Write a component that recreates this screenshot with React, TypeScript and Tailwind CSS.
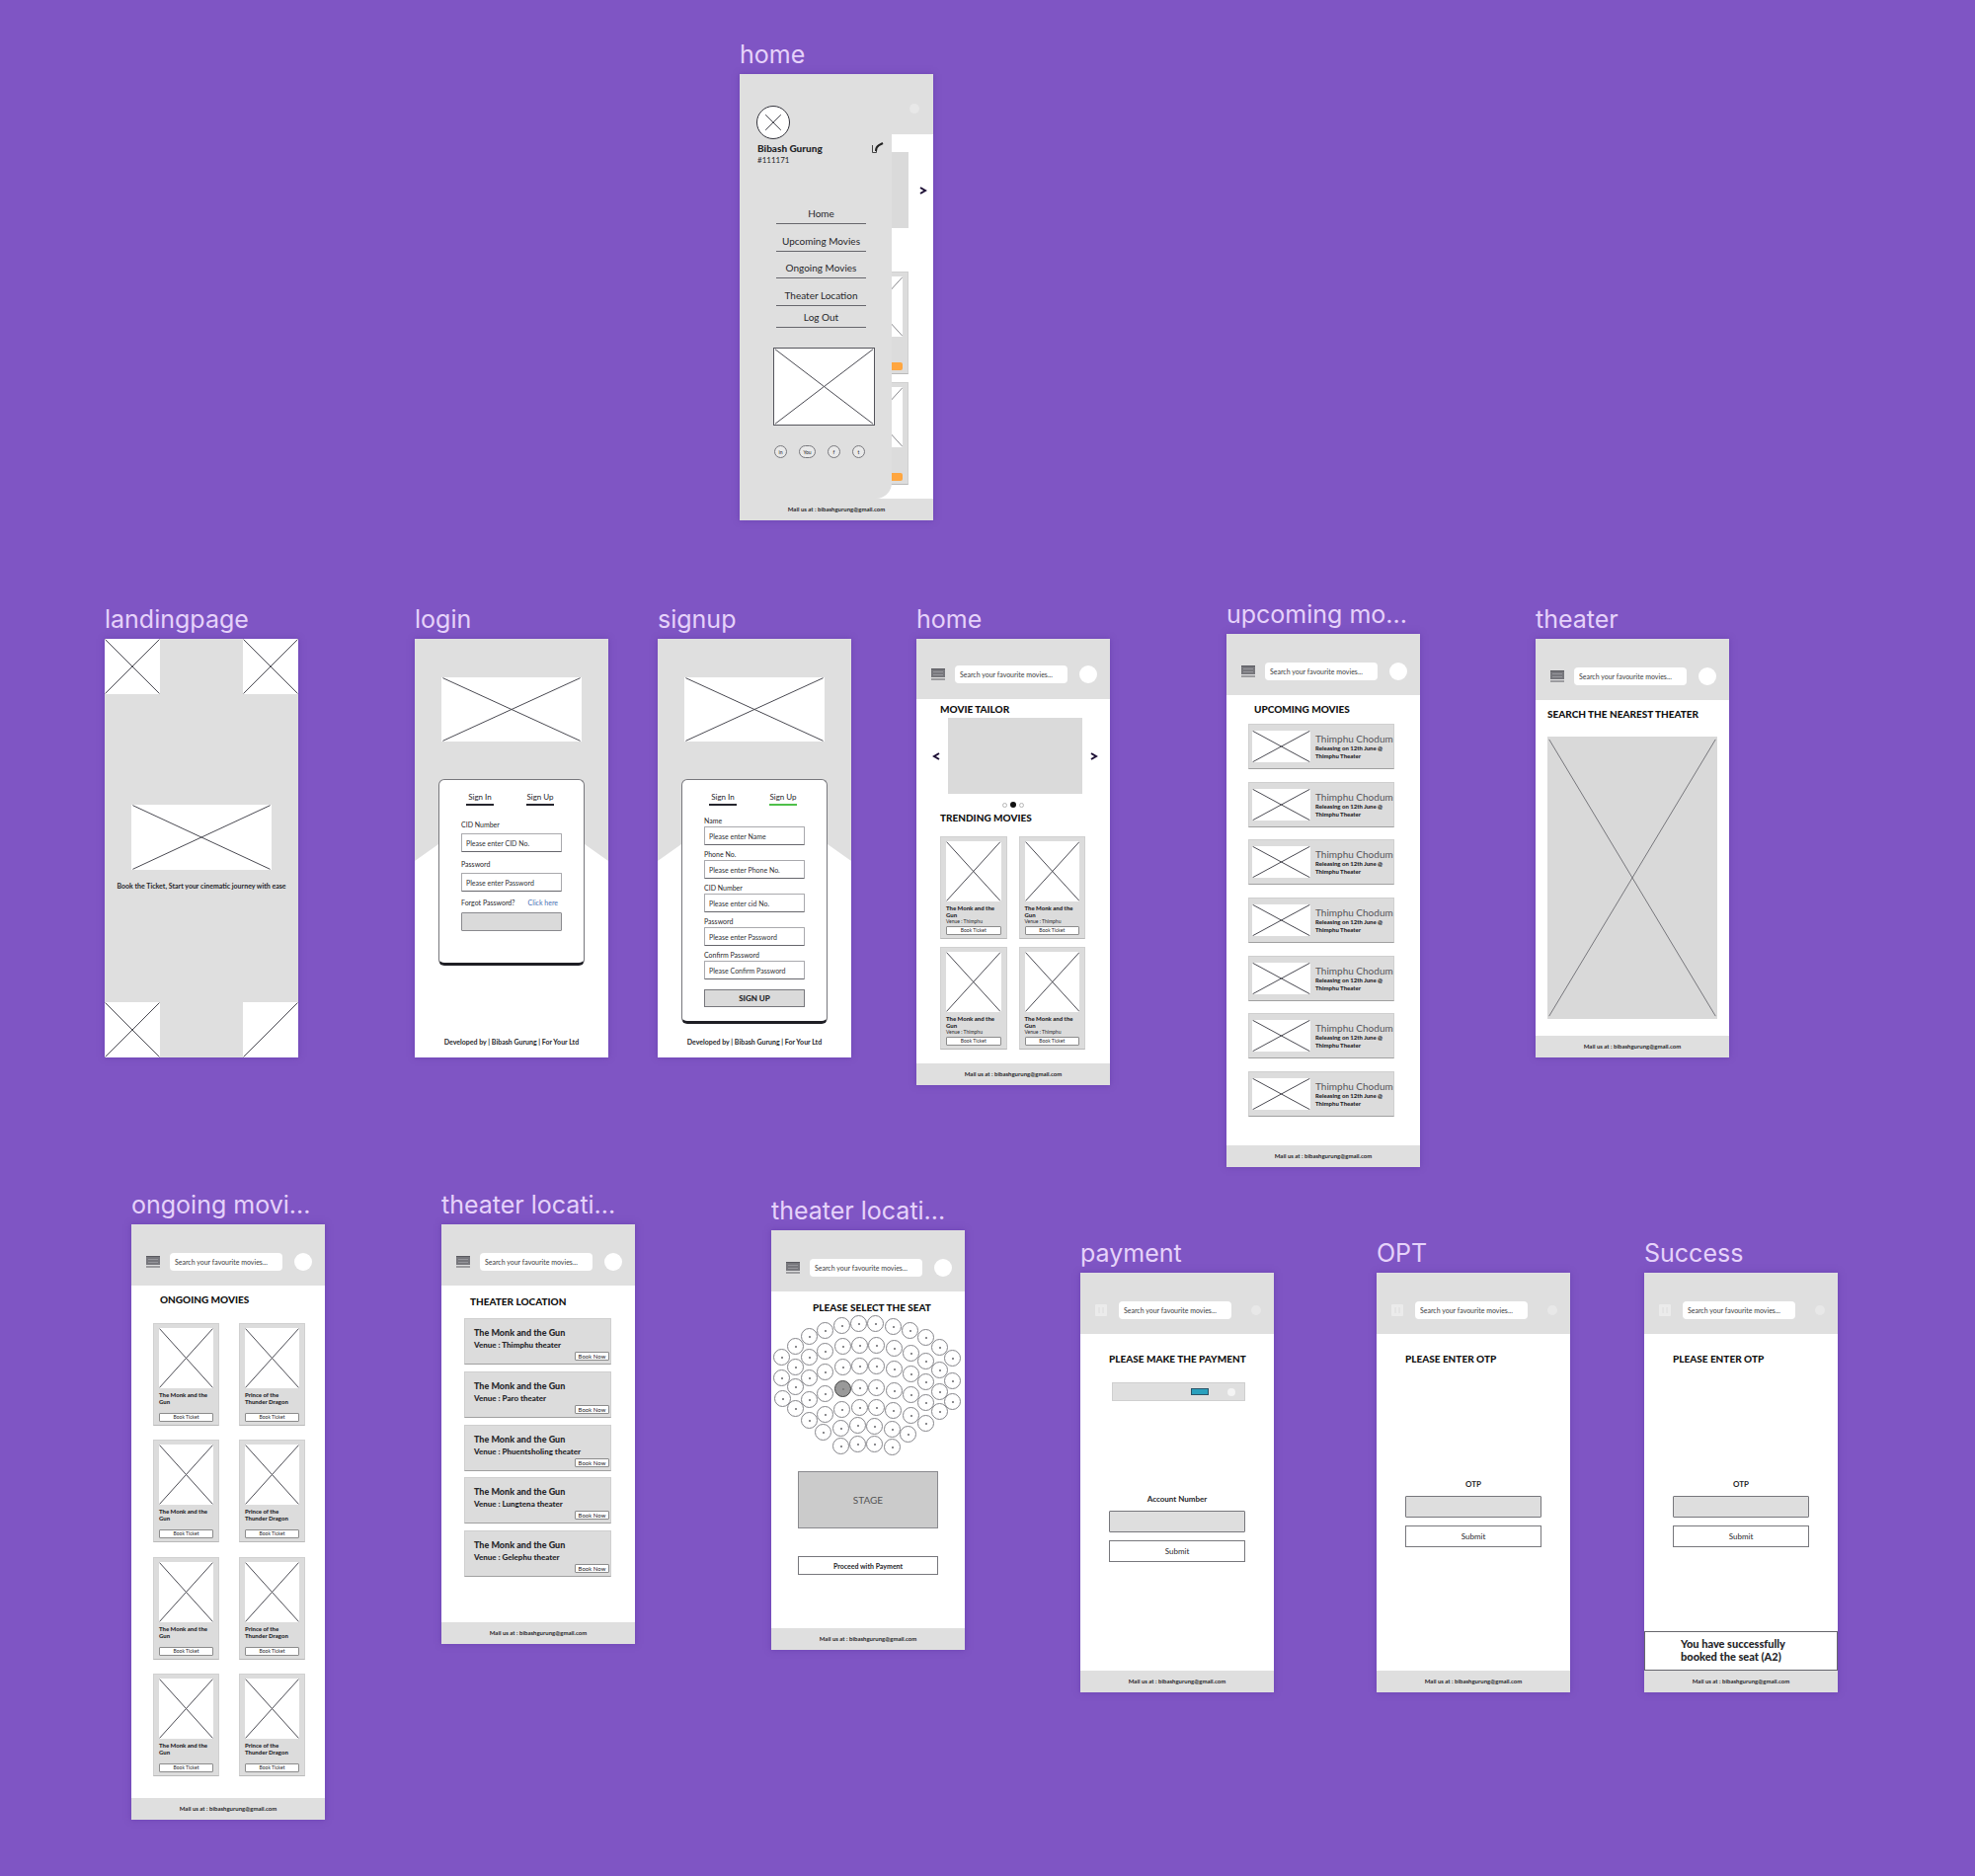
import { useId } from "react";
import type { ReactNode } from "react";

function Cross({ one = false, stroke = "#4a4a52" }: { one?: boolean; stroke?: string }) {
  return (
    <svg className="block h-full w-full" viewBox="0 0 100 100" preserveAspectRatio="none" aria-hidden="true">
      <path d="M1 99 L99 1" stroke={stroke} strokeWidth="1" vectorEffect="non-scaling-stroke" fill="none" />
      {!one && <path d="M1 1 L99 99" stroke={stroke} strokeWidth="1" vectorEffect="non-scaling-stroke" fill="none" />}
    </svg>
  );
}

function Artboard({ label, place, size, children }: { label: string; place: string; size: string; children: ReactNode }) {
  return (
    <section className={`absolute w-[196px] ${place}`}>
      <h2 className="mb-1 text-[25px] leading-8 font-normal whitespace-nowrap text-[#e6d2fa]">{label}</h2>
      <div className={`relative flex flex-col overflow-hidden bg-white font-[Lato,sans-serif] text-[#26262a] shadow-[0_0_6px_rgba(90,50,160,0.5)] ${size}`}>
        {children}
      </div>
    </section>
  );
}

function MenuIcon() {
  return (
    <svg className="block h-3 w-3.5" viewBox="0 0 14 12" aria-hidden="true">
      <rect width="14" height="9" fill="#77777c" />
      <path d="M0 .5H14M0 11H14" stroke="#5a5a60" />
      <path d="M2 3.5H12M2 6.5H12" stroke="#96969b" />
    </svg>
  );
}

function SearchBar({ pale = false, home = false }: { pale?: boolean; home?: boolean }) {
  return (
    <header className={`flex shrink-0 items-start bg-[#dfdfdf] pl-[15px] ${home ? "h-[61px] pt-[27px]" : "h-[62px] pt-[29px]"}`}>
      <button type="button" aria-label="Menu" className="flex h-[18px] w-3.5 items-center">
        {pale ? (
          <svg className="block h-3 w-3" viewBox="0 0 12 12" aria-hidden="true">
            <rect width="12" height="12" rx="1" fill="#ebebeb" />
            <path d="M4 3v6M8 3v6" stroke="#dcdcdc" />
          </svg>
        ) : (
          <MenuIcon />
        )}
      </button>
      <input
        type="search"
        aria-label="Search movies"
        placeholder="Search your favourite movies..."
        className="ml-2.5 h-[18px] w-[114px] rounded-[4px] bg-white px-[5px] text-[7px] leading-[10px] placeholder:text-[#3c3c40]"
      />
      {pale ? (
        <button type="button" aria-label="Profile" className="mt-1 ml-5 size-2.5 rounded-full bg-[#e8e8e8]" />
      ) : (
        <button type="button" aria-label="Profile" className="ml-3 size-[18px] rounded-full bg-white" />
      )}
    </header>
  );
}

function Footer() {
  return (
    <footer className="mt-auto flex h-[22px] shrink-0 items-center justify-center bg-[#dfdfdf] text-[6px] leading-[8px] font-bold">
      <p>Mail us at : bibashgurung@gmail.com</p>
    </footer>
  );
}

function Heading({ children, className }: { children?: ReactNode; className: string }) {
  return <h3 className={`min-h-3 shrink-0 text-[10px] leading-[12px] font-black whitespace-nowrap text-[#111] ${className}`}>{children}</h3>;
}

function MovieCard({ title, venue, hot = false }: { title: string[]; venue?: string; hot?: boolean }) {
  if (hot) {
    return (
      <article className="h-[104px] border border-b-[#b9b9b9] border-[#d0d0d0] bg-[#dcdcdc] px-[5px] pt-1">
        <div className="h-[61px] bg-white">
          <Cross stroke="#88888c" />
        </div>
        <button type="button" aria-label="Book ticket" className="mt-[26px] ml-auto block h-2 w-[52px] rounded-[2px] bg-[#ffa640]" />
      </article>
    );
  }
  return (
    <article className="h-[104px] border border-b-[#b9b9b9] border-[#d0d0d0] bg-[#dcdcdc] px-[5px] pt-1">
      <div className="h-[61px] bg-white">
        <Cross />
      </div>
      <h4 className="mt-[3px] text-[6px] leading-[7px] font-black whitespace-nowrap">
        {title[0]}
        <br />
        {title[1]}
      </h4>
      <p className="h-[7px] text-[5px] leading-[7px] whitespace-nowrap">{venue}</p>
      <button
        type="button"
        className="mt-[1px] block h-[9px] w-full rounded-[1px] border border-[#8c8c8c] bg-white text-[5px] leading-[7px]"
      >
        Book Ticket
      </button>
    </article>
  );
}

const MONK = ["The Monk and the", "Gun"];
const PRINCE = ["Prince of the", "Thunder Dragon"];

function HomeScreen({ hot = false }: { hot?: boolean }) {
  return (
    <>
      <SearchBarForHome hot={hot} />
      <Heading className="mt-1 ml-6">{!hot && "MOVIE TAILOR"}</Heading>
      <div className={`flex h-[77px] shrink-0 items-center justify-between pl-4 ${hot ? "mt-0.5 pr-1.5" : "mt-[3px] pr-3"}`}>
        <button type="button" aria-label="Previous" className="w-2">
          <Arrow flip />
        </button>
        <div className="h-full w-[136px] bg-[#dadada]" />
        <button type="button" aria-label="Next" className="w-2">
          <Arrow />
        </button>
      </div>
      <div className={`flex shrink-0 items-center justify-center gap-[3px] pt-1 ${hot ? "h-[19px]" : "h-[18px]"}`}>
        <span className="size-[5px] rounded-full border border-[#b5b5b5]" />
        <span className="size-[6px] rounded-full bg-[#111]" />
        <span className="size-[5px] rounded-full border border-[#b5b5b5]" />
      </div>
      <Heading className="ml-6">{!hot && "TRENDING MOVIES"}</Heading>
      <div className="mt-[13px] grid grid-cols-2 gap-x-3 gap-y-2 pr-[25px] pl-6">
        {[0, 1, 2, 3].map((i) => (
          <MovieCard key={i} title={MONK} venue="Venue : Thimphu" hot={hot} />
        ))}
      </div>
      <Footer />
    </>
  );
}

function SearchBarForHome({ hot }: { hot: boolean }) {
  if (!hot) return <SearchBar home />;
  return (
    <header className="flex h-[61px] shrink-0 justify-end bg-[#dfdfdf] pt-[30px] pr-[14px]">
      <button type="button" aria-label="Profile" className="size-2.5 rounded-full bg-[#e8e8e8]" />
    </header>
  );
}

function Arrow({ flip = false }: { flip?: boolean }) {
  return (
    <svg className="block h-2 w-2" viewBox="0 0 8 8" aria-hidden="true">
      <path d={flip ? "M7 1 L2 4 L7 7" : "M1 1 L6 4 L1 7"} stroke="#1b0d33" strokeWidth="2" fill="none" />
    </svg>
  );
}

const LINKS = ["Home", "Upcoming Movies", "Ongoing Movies", "Theater Location", "Log Out"];
const LINK_HEIGHTS = ["h-5", "h-7", "h-[27px]", "h-7", "h-[22px]"];

function Sidebar() {
  return (
    <aside className="absolute inset-x-0 top-0 h-[430px] w-[154px] rounded-br-[16px] bg-[#dfdfdf]">
      <div className="mt-8 ml-[17px] flex size-[34px] items-center justify-center rounded-full border border-[#33333b] bg-white">
        <div className="size-4">
          <Cross />
        </div>
      </div>
      <div className="mt-[3px] flex justify-between pr-2 pl-[18px]">
        <div>
          <p className="text-[10px] leading-[13px] font-black">Bibash Gurung</p>
          <p className="text-[8px] leading-[10px]">#111171</p>
        </div>
        <button type="button" aria-label="Edit profile" className="h-3 w-3.5">
          <svg className="block h-3 w-3.5" viewBox="0 0 14 12" aria-hidden="true">
            <path d="M2.5 3V10.5H6.5V9" stroke="#444" fill="none" />
            <path d="M6 9 Q6 5 9 3.2 L13 1" stroke="#222" strokeWidth="2" fill="none" />
          </svg>
        </button>
      </div>
      <nav className="mt-10 ml-[37px] flex w-[91px] flex-col">
        {LINKS.map((l, i) => (
          <a key={l} href="#" className={`flex items-end justify-center border-b border-[#66666c] pb-1 text-[10px] leading-[12px] whitespace-nowrap ${LINK_HEIGHTS[i]}`}>
            {l}
          </a>
        ))}
      </nav>
      <div className="mt-5 ml-[34px] h-[79px] w-[103px] border border-[#55555c] bg-white">
        <Cross />
      </div>
      <div className="mt-5 ml-[35px] flex items-center gap-3">
        {["in", "You", "f", "t"].map((s, i) => (
          <a
            key={s}
            href="#"
            className={`flex h-[13px] items-center justify-center rounded-full border border-[#77777c] bg-[#e9e9e9] text-[5px] leading-[6px] ${i === 1 ? "w-[17px]" : "w-[13px]"}`}
          >
            {s}
          </a>
        ))}
      </div>
    </aside>
  );
}

function Landing() {
  return (
    <div className="flex grow flex-col justify-between bg-[#dfdfdf]">
      <div className="flex justify-between">
        <div className="size-14 bg-white"><Cross /></div>
        <div className="size-14 bg-white"><Cross /></div>
      </div>
      <div className="pb-0.5">
        <div className="mx-auto h-[66px] w-[142px] bg-white"><Cross /></div>
        <p className="mt-[11px] text-center text-[7px] leading-[10px] font-bold whitespace-nowrap">
          Book the Ticket, Start your cinematic journey with ease
        </p>
      </div>
      <div className="flex justify-between">
        <div className="size-14 bg-white"><Cross /></div>
        <div className="size-14 bg-white"><Cross one /></div>
      </div>
    </div>
  );
}

function Field({ label, hint, tall }: { label: string; hint: string; tall: boolean }) {
  const id = useId();
  return (
    <div className={tall ? "h-10" : "h-[34px]"}>
      <label htmlFor={id} className={`block text-[7px] ${tall ? "h-[14px] leading-[10px]" : "h-[11px] leading-[11px]"}`}>{label}</label>
      <input
        id={id}
        type="text"
        placeholder={hint}
        className="block h-[19px] w-full rounded-[1px] border border-b-[#66666c] border-[#a9a9ad] bg-white px-1 text-[7px] leading-[10px] placeholder:text-[#303034]"
      />
    </div>
  );
}

function AuthScreen({ signup = false }: { signup?: boolean }) {
  return (
    <div className="relative flex grow flex-col items-center bg-[#dfdfdf] pt-[39px]">
      <svg className="absolute inset-0 h-full w-full" viewBox="0 0 196 424" preserveAspectRatio="none" aria-hidden="true">
        <path d="M0 225 L24 208 Q98 160 172 208 L196 225 V424 H0Z" fill="#fff" />
      </svg>
      <div className="relative h-[65px] w-[142px] bg-white"><Cross /></div>
      <form className="relative mt-[38px] w-[148px] rounded-[6px] border border-b-[3px] border-[#77777c] border-b-[#1e1e24] bg-white px-[22px] pt-[13px] pb-3">
        <div className="flex justify-between pr-2 pl-[5px] text-[8px] leading-[9px]">
          <button type="button" className="w-7 border-b-2 border-[#26262e] pb-0.5 leading-[9px]">Sign In</button>
          <button type="button" className={signup ? "w-7 border-b-2 border-[#4fc04a] pb-0.5 leading-[9px]" : "w-7 border-b-2 border-[#26262e] pb-0.5 leading-[9px]"}>
            Sign Up
          </button>
        </div>
        {signup ? (
          <div className="pt-2.5 pb-0.5">
            <Field tall={false} label="Name" hint="Please enter Name" />
            <Field tall={false} label="Phone No." hint="Please enter Phone No." />
            <Field tall={false} label="CID Number" hint="Please enter cid No." />
            <Field tall={false} label="Password" hint="Please enter Password" />
            <Field tall={false} label="Confirm Password" hint="Please Confirm Password" />
            <button type="button" className="mt-1.5 block h-[18px] w-full border border-[#77777c] bg-[#dadada] text-[8px] leading-[10px] font-black">
              SIGN UP
            </button>
          </div>
        ) : (
          <div className="pt-3.5">
            <Field tall label="CID Number" hint="Please enter CID No." />
            <Field tall label="Password" hint="Please enter Password" />
            <p className="flex justify-between text-[7px] leading-[8px] whitespace-nowrap">
              Forgot Password?
              <a href="#" className="pr-1 text-[#4a6fb5]">Click here</a>
            </p>
            <button type="button" aria-label="Sign in" className="mt-1.5 mb-5 block h-[19px] w-full rounded-[1px] border border-[#8a8a8e] bg-[#dadada]" />
          </div>
        )}
      </form>
      <p className="relative mt-auto mb-[11px] text-[7px] leading-[10px] font-bold whitespace-nowrap">
        Developed by | Bibash Gurung | For Your Ltd
      </p>
    </div>
  );
}

function Upcoming() {
  return (
    <>
      <SearchBar />
      <Heading className="mt-2 ml-7">UPCOMING MOVIES</Heading>
      <ul className="mt-[9px] mr-[26px] ml-[22px] flex h-[398px] flex-col justify-between">
        {[0, 1, 2, 3, 4, 5, 6].map((i) => (
          <li key={i} className="flex h-[46px] overflow-hidden border border-b-[#a0a0a0] border-[#cfcfcf] bg-[#dcdcdc] pt-1.5 pl-[3px]">
            <div className="h-8 w-[59px] shrink-0 bg-white"><Cross /></div>
            <div className="pl-[5px] whitespace-nowrap">
              <h4 className="pt-0.5 text-[10px] leading-[12px] text-[#55555a]">Thimphu Chodum</h4>
              <p className="text-[6px] leading-[8px] font-black">
                Releasing on 12th June @
                <br />
                Thimphu Theater
              </p>
            </div>
          </li>
        ))}
      </ul>
      <Footer />
    </>
  );
}

function Theater() {
  return (
    <>
      <SearchBar />
      <Heading className="mt-2 ml-3">SEARCH THE NEAREST THEATER</Heading>
      <div className="mx-3 mt-[17px] h-[286px] bg-[#d9d9d9]"><Cross stroke="#77777c" /></div>
      <Footer />
    </>
  );
}

function Ongoing() {
  return (
    <>
      <SearchBar />
      <Heading className="mt-2 ml-[29px]">ONGOING MOVIES</Heading>
      <div className="mt-[18px] mr-5 ml-[22px] grid h-[459px] grid-cols-2 content-between gap-x-5">
        {[0, 1, 2, 3, 4, 5, 6, 7].map((i) => (
          <MovieCard key={i} title={i % 2 ? PRINCE : MONK} />
        ))}
      </div>
      <Footer />
    </>
  );
}

const VENUES = ["Thimphu theater", "Paro theater", "Phuentsholing theater", "Lungtena theater", "Gelephu theater"];

function Locations() {
  return (
    <>
      <SearchBar />
      <Heading className="mt-2.5 ml-[29px]">THEATER LOCATION</Heading>
      <ul className="mt-[11px] mr-6 ml-[23px] flex h-[262px] flex-col justify-between">
        {VENUES.map((v) => (
          <li key={v} className="h-[47px] border border-b-[#a0a0a0] border-[#cfcfcf] bg-[#dcdcdc] pt-[7px] pl-[9px] whitespace-nowrap">
            <h4 className="text-[9px] leading-[13px] font-black">The Monk and the Gun</h4>
            <p className="text-[8px] leading-[13px] font-black">Venue : {v}</p>
            <button type="button" className="mr-px ml-auto block h-[9px] w-[35px] rounded-[1px] border border-[#8c8c8c] bg-white text-[6px] leading-[7px]">
              Book Now
            </button>
          </li>
        ))}
      </ul>
      <Footer />
    </>
  );
}

// Seat centres, in thirds of a pixel, row by row.
const SEATS: [number, number][] = [
  [37, 192], [78, 158], [119, 130], [167, 110], [219, 97], [271, 90], [322, 90], [375, 99], [426, 112], [473, 133], [515, 162], [555, 195],
  [37, 254], [78, 222], [120, 193], [169, 175], [221, 159], [273, 156], [325, 156], [377, 165], [428, 181], [473, 204], [515, 230], [555, 265],
  [40, 317], [78, 283], [121, 255], [169, 238], [221, 222], [273, 218], [325, 218], [377, 227], [428, 243], [473, 266], [515, 296], [555, 326],
  [78, 349], [121, 320], [169, 302], [221, 289], [273, 284], [325, 284], [377, 294], [428, 306], [473, 331], [515, 358],
  [120, 384], [168, 366], [220, 351], [272, 345], [323, 345], [375, 354], [428, 368], [473, 392],
  [163, 421], [215, 408], [268, 400], [319, 403], [371, 411], [421, 425],
  [215, 462], [268, 456], [319, 457], [371, 465],
];

function SeatMap() {
  return (
    <>
      <SearchBar />
      <Heading className="mt-2.5 pl-2 text-center">PLEASE SELECT THE SEAT</Heading>
      <div className="relative h-40 shrink-0">
        {SEATS.map(([x, y], i) => (
          <button
            key={i}
            type="button"
            aria-label={`Seat ${i + 1}`}
            style={{ left: Math.round(x / 3) - 10, top: Math.round(y / 3) - 28 }}
            className={`absolute flex size-[17px] items-center justify-center rounded-full border ${i === 39 ? "border-[#444] bg-[#999]" : "border-[#85858a]"}`}
          >
            <span className={`size-0.5 rounded-full ${i === 39 ? "bg-[#777]" : "bg-[#66666a]"}`} />
          </button>
        ))}
      </div>
      <div className="mx-auto flex h-[58px] w-[142px] shrink-0 items-center justify-center border border-[#8a8a8e] bg-[#cbcbcb] text-[10px] leading-[12px] text-[#555]">
        STAGE
      </div>
      <button type="button" className="mx-auto mt-7 h-[19px] w-[142px] shrink-0 border border-[#77777c] text-[7px] leading-[10px] font-bold">
        Proceed with Payment
      </button>
      <Footer />
    </>
  );
}

function EntryForm({ label, wrap }: { label: string; wrap: string }) {
  const id = useId();
  return (
    <form className={`mx-[29px] flex flex-col ${wrap}`}>
      <label htmlFor={id} className="text-center text-[8px] leading-[10px] font-bold">{label}</label>
      <input id={id} type="text" className="mt-[7px] h-[22px] w-full rounded-[1px] border border-[#77777c] bg-[#dedede] px-1 text-[8px]" />
      <button type="button" className="mt-2 h-[22px] w-full border border-[#77777c] bg-white text-[8px] leading-[10px]">Submit</button>
    </form>
  );
}

function Payment() {
  return (
    <>
      <SearchBar pale />
      <Heading className="mt-[19px] ml-[29px]">PLEASE MAKE THE PAYMENT</Heading>
      <div className="mt-[18px] mr-[29px] ml-8 flex h-[19px] items-center justify-end gap-[19px] border border-[#cfcfcf] bg-[#dfdfdf] pr-[9px]">
        <span className="h-[7px] w-[18px] border border-[#2a5468] bg-[#2aa0bd]" />
        <span className="size-2 rounded-full bg-[#f4f4f4]" />
      </div>
      <EntryForm label="Account Number" wrap="mt-[94px]" />
      <Footer />
    </>
  );
}

function Otp({ done = false }: { done?: boolean }) {
  return (
    <>
      <SearchBar pale />
      <Heading className="mt-[19px] ml-[29px]">PLEASE ENTER OTP</Heading>
      <EntryForm label="OTP" wrap="mt-[116px]" />
      <div className="mt-auto">
        {done && (
          <p role="status" className="h-10 border border-[#66666c] py-[5px] pl-9 text-[11px] leading-[13px] font-black whitespace-nowrap">
            You have successfully
            <br />
            booked the seat (A2)
          </p>
        )}
        <Footer />
      </div>
    </>
  );
}

export default function App() {
  return (
    <main className="relative min-h-[1900px] w-full overflow-hidden bg-[#7f55c4] font-[Inter,sans-serif]">
      <Artboard label="home" place="left-[749px] top-[39px]" size="h-[452px]">
        <HomeScreen hot />
        <Sidebar />
      </Artboard>
      <Artboard label="landingpage" place="left-[106px] top-[611px]" size="h-[424px]"><Landing /></Artboard>
      <Artboard label="login" place="left-[420px] top-[611px]" size="h-[424px]"><AuthScreen /></Artboard>
      <Artboard label="signup" place="left-[666px] top-[611px]" size="h-[424px]"><AuthScreen signup /></Artboard>
      <Artboard label="home" place="left-[928px] top-[611px]" size="h-[452px]"><HomeScreen /></Artboard>
      <Artboard label="upcoming mo..." place="left-[1242px] top-[606px]" size="h-[540px]"><Upcoming /></Artboard>
      <Artboard label="theater" place="left-[1555px] top-[611px]" size="h-[424px]"><Theater /></Artboard>
      <Artboard label="ongoing movi..." place="left-[133px] top-[1204px]" size="h-[603px]"><Ongoing /></Artboard>
      <Artboard label="theater locati..." place="left-[447px] top-[1204px]" size="h-[425px]"><Locations /></Artboard>
      <Artboard label="theater locati..." place="left-[781px] top-[1210px]" size="h-[425px]"><SeatMap /></Artboard>
      <Artboard label="payment" place="left-[1094px] top-[1253px]" size="h-[425px]"><Payment /></Artboard>
      <Artboard label="OPT" place="left-[1394px] top-[1253px]" size="h-[425px]"><Otp /></Artboard>
      <Artboard label="Success" place="left-[1665px] top-[1253px]" size="h-[425px]"><Otp done /></Artboard>
    </main>
  );
}
